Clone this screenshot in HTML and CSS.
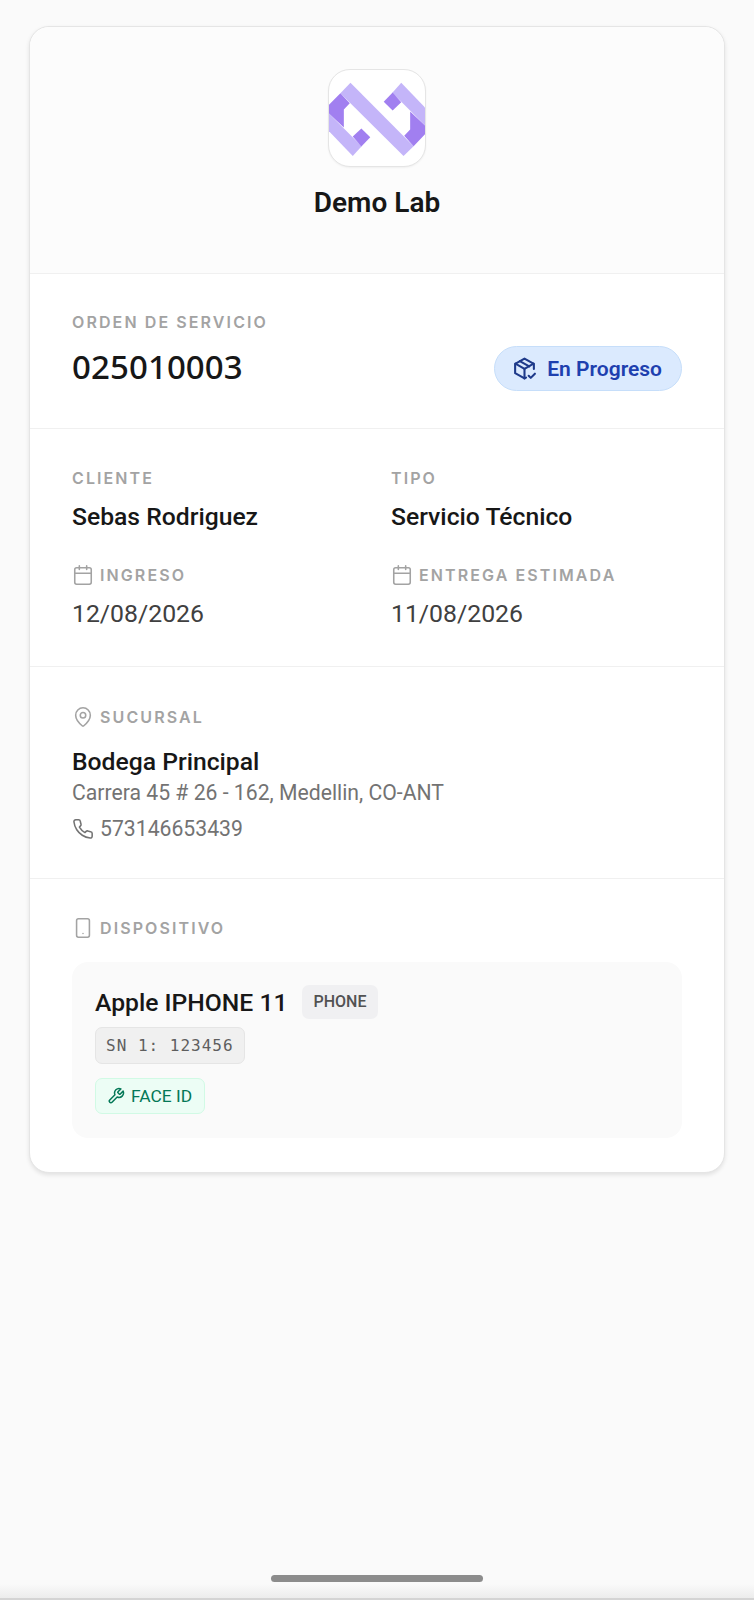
FILE: index.html
```html
<!DOCTYPE html>
<html lang="es">
<head>
    <meta charset="UTF-8">
    <title>Demo Lab</title>
    <link rel="stylesheet" href="styles.css">
</head>
<body>
<div class="page">
    <div class="card">
        <div class="section head">
            <div class="logo">
                <svg width="96" height="96" viewBox="0 0 97 97">
                    <polygon fill="#c4b5f9" points="21.700,13 85.500,77 75.300,87 11.500,23.500"/>
                    <polygon fill="#c4b5f9" points="0,44 33,77 24,87 0,62"/>
                    <polygon fill="#c4b5f9" points="97,56 64,23 73,13 97,38"/>
                    <polygon fill="#a17ff0" points="11.500,23.500 21,33.500 15,40 15,58 0,44 0,35"/>
                    <polygon fill="#a17ff0" points="85.500,77 76,66.500 82,60 82,42 97,56 97,65"/>
                    <polygon fill="#a17ff0" points="32.700,59 41.700,68 32.700,77.300 24,67.300"/>
                    <polygon fill="#a17ff0" points="64.300,41 55.300,32 64.300,22.700 73,32.700"/>
                </svg>
            </div>
            <div class="shop">Demo Lab</div>
        </div>
        <div class="section order">
            <div>
                <div class="label">ORDEN DE SERVICIO</div>
                <div class="number">025010003</div>
            </div>
            <div class="status">
                <svg width="25" height="25" viewBox="0 0 24 24" fill="none" stroke="#1e3a8a" stroke-width="2" stroke-linecap="round" stroke-linejoin="round">
                    <path d="M21 12.500V7.500L12 2.500 3 7.500v9l9 5 1.500-.8"/>
                    <path d="M3.300 7.300 12 12.300l8.700-5"/>
                    <path d="M12 12.300V21.500"/>
                    <path d="M7.500 5 16.500 10"/>
                    <path d="m16 19 2 2 4-4"/>
                </svg>
                En Progreso
            </div>
        </div>
        <div class="section grid">
            <div>
                <div class="label">CLIENTE</div>
                <div class="value">Sebas Rodriguez</div>
            </div>
            <div>
                <div class="label">TIPO</div>
                <div class="value">Servicio Técnico</div>
            </div>
            <div>
                <div class="label">
                    <svg class="ico" viewBox="0 0 24 24"><path d="M8 2v4M16 2v4"/><rect x="3" y="4" width="18" height="18" rx="2"/><path d="M3 10h18"/></svg>
                    INGRESO
                </div>
                <div class="date">12/08/2026</div>
            </div>
            <div>
                <div class="label">
                    <svg class="ico" viewBox="0 0 24 24"><path d="M8 2v4M16 2v4"/><rect x="3" y="4" width="18" height="18" rx="2"/><path d="M3 10h18"/></svg>
                    ENTREGA ESTIMADA
                </div>
                <div class="date">11/08/2026</div>
            </div>
        </div>
        <div class="section branch">
            <div class="label">
                <svg class="ico" viewBox="0 0 24 24"><path d="M20 10c0 5-5.500 10.200-7.400 11.800a1 1 0 0 1-1.200 0C9.500 20.200 4 15 4 10a8 8 0 0 1 16 0"/><circle cx="12" cy="10" r="3"/></svg>
                SUCURSAL
            </div>
            <div class="branch-name">Bodega Principal</div>
            <div class="address">Carrera 45 # 26 - 162, Medellin, CO-ANT</div>
            <div class="phone">
                <svg class="ico dark" viewBox="0 0 24 24"><path d="M22 16.900v3a2 2 0 0 1-2.200 2 19.800 19.800 0 0 1-8.600-3.100 19.500 19.500 0 0 1-6-6 19.800 19.800 0 0 1-3.100-8.700A2 2 0 0 1 4.100 2h3a2 2 0 0 1 2 1.700c.1 1 .4 1.900.7 2.800a2 2 0 0 1-.5 2.100L8.100 9.900a16 16 0 0 0 6 6l1.300-1.300a2 2 0 0 1 2.100-.4c.9.300 1.800.6 2.800.7a2 2 0 0 1 1.700 2"/></svg>
                573146653439
            </div>
        </div>
        <div class="section device">
            <div class="label">
                <svg class="ico" viewBox="0 0 24 24"><rect x="5" y="2" width="14" height="20" rx="2"/><path d="M12 18h.01"/></svg>
                DISPOSITIVO
            </div>
            <div class="device-box">
                <div class="device-top">
                    <span class="device-name">Apple IPHONE 11</span>
                    <span class="tag">PHONE</span>
                </div>
                <div class="serial">SN 1: 123456</div>
                <div class="fault">
                    <svg width="18" height="18" viewBox="0 0 24 24" fill="none" stroke="#047857" stroke-width="2" stroke-linecap="round" stroke-linejoin="round"><path d="M14.700 6.300a1 1 0 0 0 0 1.400l1.600 1.600a1 1 0 0 0 1.400 0l3.800-3.800a6 6 0 0 1-7.900 7.900l-6.900 6.900a2.100 2.100 0 0 1-3-3l6.900-6.900a6 6 0 0 1 7.900-7.900z"/></svg>
                    FACE ID
                </div>
            </div>
        </div>
    </div>
    <div class="home-bar"></div>
</div>
</body>
</html>
```

FILE: styles.css
```css
*{
    box-sizing: border-box;
    margin: 0;
    padding: 0;
}
body{
    background: #fafafa;
    font-family: Roboto, "Liberation Sans", sans-serif;
    color: #171717;
}
.page{
    height: 1600px;
    padding: 26px 29px 0;
    display: flex;
    flex-direction: column;
    overflow: hidden;
    background: linear-gradient(#fafafa calc(100% - 14px), #ececec);
    border-bottom: 2px solid #d4d4d4;
}
.card{
    background: #fff;
    border: 1px solid #e5e5e5;
    border-radius: 20px;
    box-shadow: 0 2px 4px rgba(0,0,0,.1);
}
.section{
    padding: 32px 42px;
    border-bottom: 1px solid #f0f0f0;
}
.section:last-child{
    border-bottom: 0;
}
.head{
    background: #fcfcfc;
    border-radius: 20px 20px 0 0;
    padding: 42px 42px 54px;
    display: flex;
    flex-direction: column;
    align-items: center;
}
.logo{
    width: 98px;
    height: 98px;
    background: #fff;
    border: 1px solid #e5e5e5;
    border-radius: 22px;
    overflow: hidden;
    box-shadow: 0 1px 2px rgba(0,0,0,.05);
}
.logo svg{
    display: block;
}
.shop{
    font-size: 28px;
    font-weight: 600;
    line-height: 32px;
    margin-top: 20px;
}
.label{
    display: flex;
    align-items: center;
    gap: 6px;
    font-family: Inter, Roboto, sans-serif;
    font-size: 16px;
    font-weight: 600;
    letter-spacing: 2.1px;
    line-height: 20px;
    color: #a3a3a3;
}
.ico{
    width: 22px;
    height: 22px;
    fill: none;
    stroke: #a3a3a3;
    stroke-width: 1.7;
    stroke-linecap: round;
    stroke-linejoin: round;
    flex: none;
}
.ico.dark{
    stroke: #737373;
}
.order{
    display: flex;
    justify-content: space-between;
    align-items: flex-end;
    padding-top: 38px;
    padding-bottom: 38px;
}
.number{
    font-family: "Noto Sans", Roboto, sans-serif;
    font-size: 33px;
    font-weight: 500;
    line-height: 46px;
    margin-top: 12px;
    letter-spacing: .1px;
}
.status{
    display: flex;
    align-items: center;
    gap: 10px;
    height: 45px;
    padding: 0 19px 0 17px;
    margin-bottom: -1px;
    background: #dbeafe;
    border: 1px solid #c6defa;
    border-radius: 23px;
    color: #1e40af;
    font-size: 21px;
    font-weight: 600;
}
.grid{
    display: grid;
    grid-template-columns: 319px 1fr;
    row-gap: 32px;
    padding-top: 39px;
    padding-bottom: 37px;
}
.value{
    font-size: 24.7px;
    font-weight: 500;
    line-height: 30px;
    margin-top: 14px;
}
.date{
    font-size: 24.8px;
    line-height: 30px;
    margin-top: 13px;
    color: #404040;
}
.branch{
    padding-top: 39px;
    padding-bottom: 35px;
}
.branch-name{
    font-size: 24.7px;
    font-weight: 500;
    line-height: 30px;
    margin-top: 19px;
}
.address{
    font-size: 21.2px;
    line-height: 28px;
    margin-top: 2px;
    color: #737373;
}
.phone{
    display: flex;
    align-items: center;
    gap: 6px;
    font-size: 21.2px;
    line-height: 28px;
    margin-top: 8px;
    color: #737373;
}
.device{
    padding-top: 38px;
    padding-bottom: 34px;
}
.device-box{
    margin-top: 23px;
    padding: 23px 23px 24px;
    background: #fafafa;
    border-radius: 16px;
}
.device-top{
    display: flex;
    align-items: center;
    gap: 14px;
}
.device-name{
    font-size: 24.7px;
    font-weight: 500;
}
.tag{
    padding: 0 12px;
    height: 34px;
    line-height: 34px;
    background: #f0f0f2;
    border-radius: 7px;
    color: #525252;
    font-size: 16px;
    font-weight: 500;
}
.serial{
    width: fit-content;
    margin-top: 8px;
    padding: 0 10px;
    height: 37px;
    line-height: 35px;
    background: #f0f0f0;
    border: 1px solid #e5e5e5;
    border-radius: 7px;
    font-family: "DejaVu Sans Mono", monospace;
    font-size: 16px;
    letter-spacing: 1px;
    color: #5e5e5e;
}
.fault{
    display: flex;
    align-items: center;
    gap: 6px;
    width: fit-content;
    margin-top: 14px;
    padding: 0 12px 0 11px;
    height: 36px;
    background: #ecfdf5;
    border: 1px solid #d1fae5;
    border-radius: 7px;
    color: #047857;
    font-size: 17.4px;
}
.home-bar{
    width: 212px;
    height: 7px;
    margin: auto auto 16px;
    background: #8c8c8c;
    border-radius: 4px;
}
```
